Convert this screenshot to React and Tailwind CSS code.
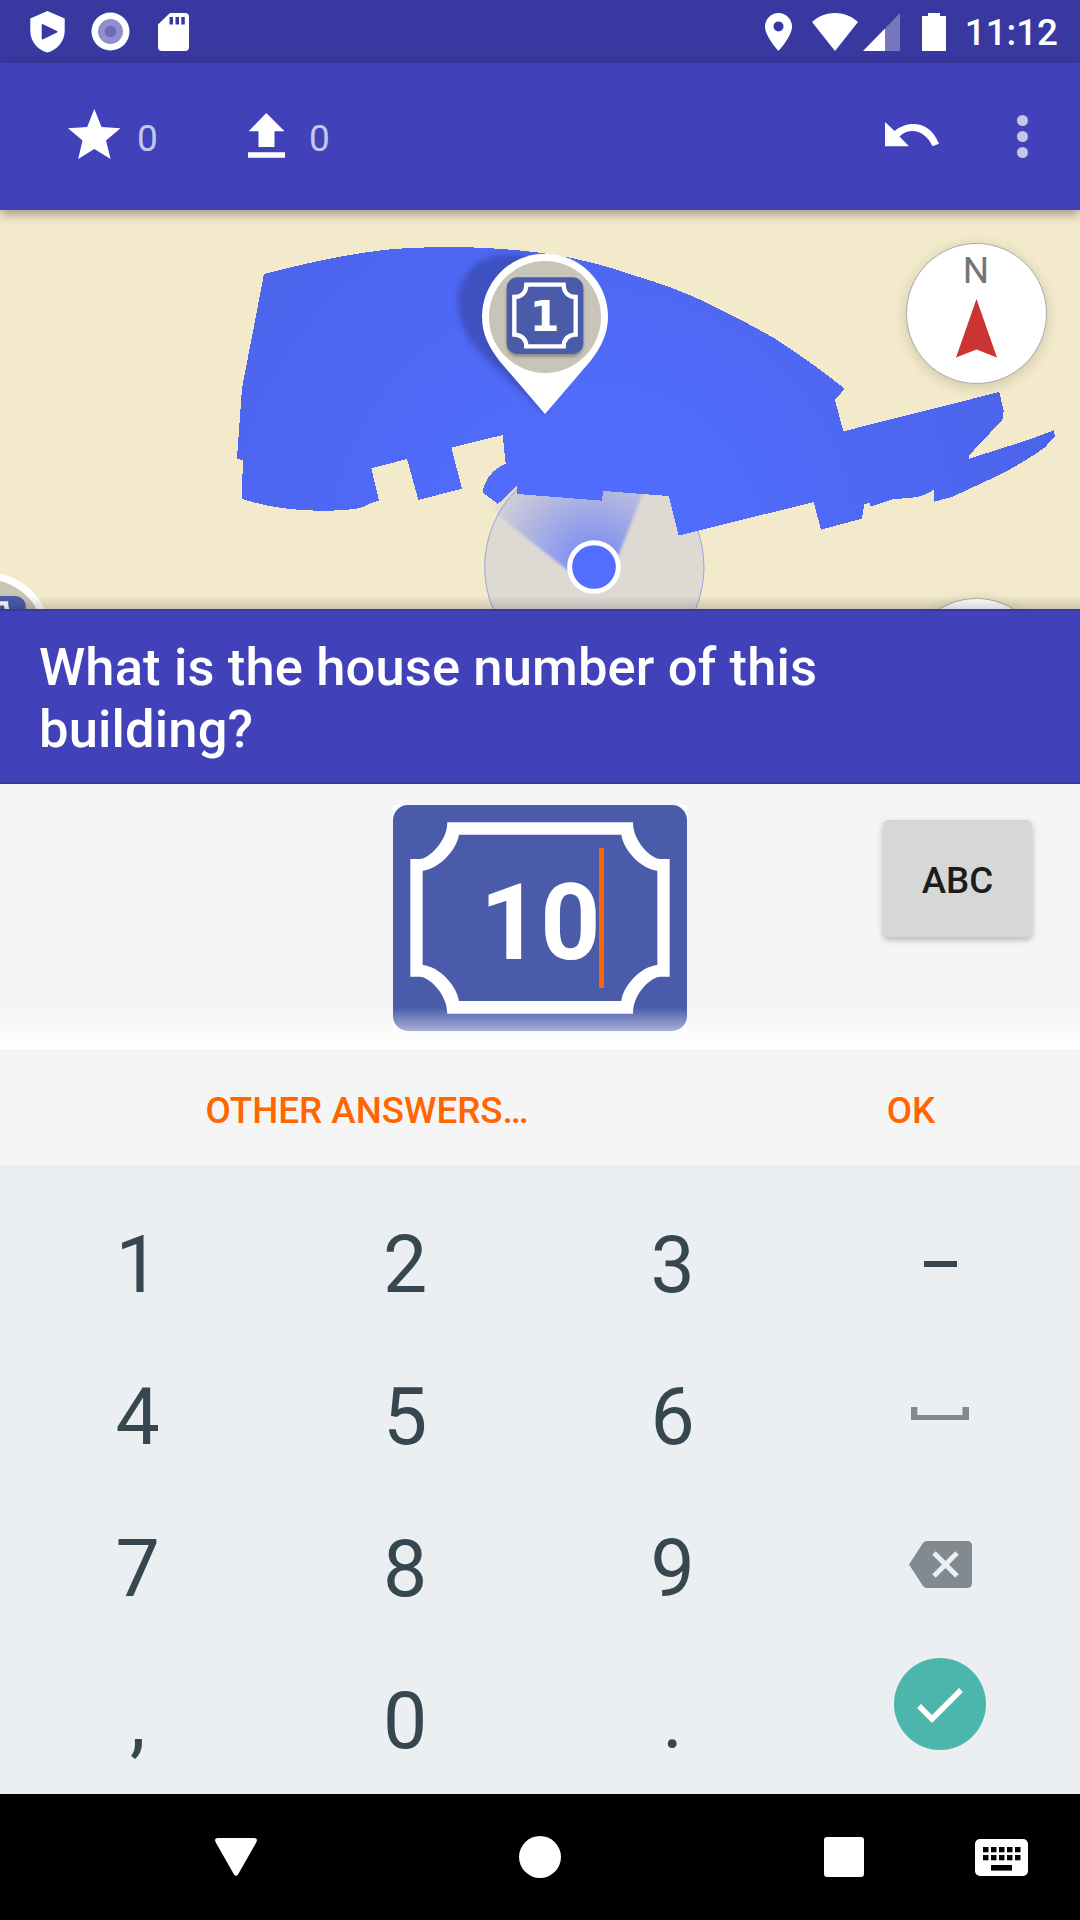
const KEY_ROWS = [
  ['1', '2', '3', 'minus'],
  ['4', '5', '6', 'space'],
  ['7', '8', '9', 'delete'],
  [',', '0', '.', 'done'],
];

function StatusBar() {
  return (
    <div className="flex h-[63px] items-center justify-between bg-[#3838a0] pl-[30px] pr-[22px] text-white">
      <div className="flex h-[63px] items-center">
        <svg width="35" height="42" viewBox="0 0 35 42">
          <path fillRule="evenodd" fill="#fff" d="M17.4 0L34.7 7.5V20C34.7 31 26 39.500 17.4 41.500C8.500 39.500 .3 31 .3 20V7.500ZM13 13.200C12.200 12.800 11.700 13.200 11.700 14V27.500C11.700 28.300 12.400 28.600 13.200 28.200L27 21.500C27.700 21.100 27.700 20.500 27 20.100Z" />
        </svg>
        <svg width="39" height="39" viewBox="0 0 39 39" className="ml-[26px]">
          <circle cx="19.500" cy="19.500" r="19" fill="#fff" />
          <circle cx="19.500" cy="19.500" r="12.500" fill="#8f8fcc" />
          <circle cx="19.500" cy="19.500" r="5.700" fill="#6b6bba" />
        </svg>
        <svg width="31" height="38" viewBox="0 0 31 38" className="ml-[28px]">
          <path fillRule="evenodd" fill="#fff" d="M12 0H27Q31 0 31 4V34Q31 38 27 38H4Q0 38 0 34V11.500ZM11.500 4V11.500H15V4ZM17.500 4V11.500H21V4ZM23.300 4V11.500H26.800V4Z" />
        </svg>
      </div>
      <div className="flex h-[63px] items-center">
        <svg width="27" height="38" viewBox="0 0 27 38">
          <path fillRule="evenodd" fill="#fff" d="M13.500 0A13.500 13.500 0 0 0 0 13.500C0 23.500 13.500 38 13.500 38S27 23.500 27 13.500A13.500 13.500 0 0 0 13.500 0ZM13.500 8.400a5 5 0 1 1 0 10a5 5 0 0 1 0-10Z" />
        </svg>
        <svg width="46" height="38" viewBox="0 0 46 38" className="ml-[20px]">
          <path fill="#fff" d="M0 9C13-3 33-3 46 9L23 38Z" />
        </svg>
        <svg width="37" height="38" viewBox="0 0 37 38" className="ml-[5px]">
          <path fill="#7676bd" d="M22 15.500L37 0V38H22Z" />
          <path fill="#fff" d="M22 15.500V38H0Z" />
        </svg>
        <svg width="24" height="38" viewBox="0 0 24 38" className="ml-[22px]">
          <path fill="#fff" d="M6 0H18V3H24V38H0V3H6Z" />
        </svg>
        <span className="ml-[19px] mt-[3px] text-[36.750px] font-medium leading-none">11:12</span>
      </div>
    </div>
  );
}

function Toolbar() {
  return (
    <div className="relative z-10 flex h-[147px] items-center bg-[#4141ba] pl-[68px] shadow-[0_4px_10px_rgba(0,0,0,0.35)]">
      <svg width="53" height="51" viewBox="0 0 53 51" className="-mt-[4px]">
        <path fill="#fff" d="M26.300 0L33.500 18L52.500 19.300L38 31.500L42.600 50L26.300 40L10.200 50L14.500 31.500L0 19.300L19.200 18Z" />
      </svg>
      <span className="ml-[16px] mt-[4px] w-[22px] text-[37px] leading-none text-[#c6c6ea]">0</span>
      <svg width="37" height="46" viewBox="0 0 37 46" className="ml-[89px] -mt-[2px]">
        <path fill="#fff" d="M18.300 0L36.500 18.300H26.500V34H10.500V18.300H.6ZM0 39.300H37V44.800H0Z" />
      </svg>
      <span className="ml-[24px] mt-[4px] w-[22px] text-[37px] leading-none text-[#c6c6ea]">0</span>
      <svg width="54" height="25" viewBox="0 0 54 25" className="ml-auto -mt-[5px]">
        <path fill="#fff" d="M0 0L9.600 9C22-2 45-2 54 21.700L47.500 24.300C41 9 25 4 14.500 14.500L24 24.300H0Z" />
      </svg>
      <div className="ml-[78px] mr-[52px] flex flex-col gap-[5px]">
        <i className="h-[11px] w-[11px] rounded-full bg-[#c6c6ea]" />
        <i className="h-[11px] w-[11px] rounded-full bg-[#c6c6ea]" />
        <i className="h-[11px] w-[11px] rounded-full bg-[#c6c6ea]" />
      </div>
    </div>
  );
}

function QuestPin({ x, y, label }) {
  return (
    <g transform={`translate(${x} ${y})`}>
      <path filter="url(#soft)" fill="#26307a" opacity=".42" d="M0 290C-50 240-160 150-205 95C-255 35-268-30-258-75C-240-145-190-185-110-187C-40-187 60-160 80-60Z" />
      <path fill="#fff" d="M0 292L-137 132C-165 95-189 55-189 0A189 189 0 0 1 189 0C189 55 165 95 137 132Z" />
      <circle r="168" cy="1" fill="#c8c4b8" />
      <rect x="-115" y="-110" width="230" height="230" rx="32" fill="#8f8c82" filter="url(#tiny)" />
      <rect x="-115" y="-118" width="230" height="230" rx="32" fill="#4a5baa" />
      <path fill="none" stroke="#fff" strokeWidth="13" d="M-56-96H56C56-73 70-59 92-59V54C70 54 56 68 56 89H-56C-56 68-70 54-92 54V-59C-70-59-56-73-56-96Z" />
      {label && (
        <text x="-1" y="43" textAnchor="middle" fontFamily="DejaVu Sans" fontWeight="700" fontSize="128" fill="#fff">{label}</text>
      )}
    </g>
  );
}

function Compass() {
  return (
    <div className="flex h-[141px] w-[141px] flex-col items-center rounded-full border border-[#aaa] bg-white shadow-[0_3px_14px_rgba(0,0,0,0.16)]">
      <span className="mt-[8px] text-[37px] leading-[38px] text-[#757575]">N</span>
      <svg width="41" height="59" viewBox="0 0 41 59" className="mt-[9px]">
        <path fill="#c33" d="M20.500 0L41 58.500L20.500 50.500L0 58.500Z" />
      </svg>
    </div>
  );
}

function MapView() {
  return (
    <div className="relative h-[399px] overflow-hidden bg-[#f3eacb]">
      <svg width="1080" height="399" viewBox="0 210 1080 399" className="block">
        <defs>
          <filter id="soft" x="-20%" y="-20%" width="140%" height="140%"><feGaussianBlur stdDeviation="9" /></filter>
          <filter id="tiny"><feGaussianBlur stdDeviation="4" /></filter>
          <radialGradient id="area" gradientUnits="userSpaceOnUse" cx="1180" cy="1000" r="1500">
            <stop offset="0" stopColor="#526dff" />
            <stop offset=".4" stopColor="#506af8" />
            <stop offset="1" stopColor="#4c63e8" />
          </radialGradient>
          <radialGradient id="cone" gradientUnits="userSpaceOnUse" cx="1182" cy="1041" r="375">
            <stop offset="0" stopColor="#536dfe" stopOpacity=".8" />
            <stop offset="1" stopColor="#536dfe" stopOpacity="0" />
          </radialGradient>
        </defs>
        <g transform="translate(200 220) scale(.33333)">
          <circle cx="1183" cy="1041" r="329" fill="#ded9d3" stroke="#98a2e4" strokeWidth="3" />
          <path fill="url(#cone)" filter="url(#tiny)" d="M1222 1090L1105 1052L920 907L855 840L950 720H1370L1328 822Z" />
          <path
            fill="url(#area)"
            shapeRendering="crispEdges"
            d="M192 162C350 122 520 82 690 82H810Q910 85 1010 97Q1160 115 1320 172Q1400 195 1485 232Q1600 285 1720 353Q1830 423 1934 506L1905 540L1930 634L2398 516L2411 573L2407 600L2308 705V716L2490 658L2561 631L2565 648L2535 682Q2480 722 2400 764L2258 830L2203 845L2202 808L2180 822Q2160 831 2135 833L2078 838L2020 857H2010V850L1993 851L1986 896L1863 929L1841 846L1436 947L1406 828L1210 813L1205 842L951 822L950 797L894 852L847 817Q860 755 917 731L908 645L754 683L786 806L655 840L621 717L514 745L537 842L505 852Q485 872 370 872Q230 872 125 836L129 722L111 716L126 505Z"
          />
          <circle cx="1182" cy="1041" r="73" fill="#536dfe" stroke="#fff" strokeWidth="15" />
          <QuestPin x={1035} y={290} label="1" />
          <QuestPin x={-638} y={1246} />
        </g>
      </svg>
      <div className="absolute left-[905.500px] top-[33px]"><Compass /></div>
      <div className="absolute left-[905.500px] top-[388px] h-[141px] w-[141px] rounded-full border border-[#aaa] bg-white shadow-[0_3px_14px_rgba(0,0,0,0.16)]" />
      <div className="absolute inset-x-0 bottom-0 h-[13px] bg-gradient-to-b from-transparent to-black/15" />
    </div>
  );
}

function HouseNumberForm() {
  return (
    <div className="relative flex h-[265px] items-start bg-[#f5f5f5]">
      <div className="ml-[393px] mt-[21px] grid h-[226px] w-[294px] bg-white">
        <svg width="294" height="226" viewBox="39 75 882 678" className="col-start-1 row-start-1">
          <rect x="39" y="75" width="882" height="678" rx="45" fill="#4a5baa" />
          <path
            fill="#fff"
            fillRule="evenodd"
            d="M202 127H759C758 185 815 237 840 237H869V590H840C815 590 758 640 759 701H202C202 640 145 590 120 590H91V237H120C145 237 202 185 202 127ZM237 164C230 210 178 266 128 272V555C178 560 230 616 237 663H724C730 616 782 560 832 555V272C782 266 730 210 724 164Z"
          />
        </svg>
        <div className="col-start-1 row-start-1 flex pl-[87px] pt-[43px]">
          <span className="mt-[14px] w-[119px] text-[105px] font-bold leading-[123px] text-white">10</span>
          <span className="h-[140px] w-[5px] bg-[#f60]" />
        </div>
      </div>
      <button className="ml-[196px] mt-[36px] h-[117px] w-[149px] rounded-[5px] bg-[#d6d8d7] pt-[5px] text-[36.750px] font-medium text-[#1c1c1c] shadow-[0_3px_6px_rgba(0,0,0,0.25)]">ABC</button>
      <div className="absolute inset-x-0 bottom-0 h-[42px] bg-gradient-to-b from-white/0 to-white/90" />
    </div>
  );
}

const ICONS = {
  minus: <div className="mb-[10px] h-[6px] w-[33px] bg-[#37474f]" />,
  space: (
    <svg width="58" height="13" viewBox="0 0 58 13" className="mb-[16px]">
      <path fill="#808a90" d="M0 0H6.300V8H51.500V0H58V13H0Z" />
    </svg>
  ),
  delete: (
    <svg width="63" height="47" viewBox="0 0 63 47" className="mb-[17px]">
      <path fill="#808a90" d="M18 0H58Q63 0 63 5V42Q63 47 58 47H18Q15.500 47 14 45L0 23.500L14 2Q15.500 0 18 0Z" />
      <path stroke="#ebeff2" strokeWidth="5" d="M25 12L48 35M48 12L25 35" />
    </svg>
  ),
  done: (
    <svg width="92" height="92" viewBox="0 0 92 92" className="mb-[42px]">
      <circle cx="46" cy="46" r="46" fill="#4db6ac" />
      <path fill="none" stroke="#fff" strokeWidth="5.500" d="M25 48L38 61L67 32" />
    </svg>
  ),
};

function Keyboard() {
  return (
    <div className="flex h-[625px] flex-col bg-[#ebeff2] pl-[4px] pt-[24px]">
      {KEY_ROWS.map((row) => (
        <div key={row[0]} className="flex h-[152px]">
          {row.map((k) => (
            <button key={k} className="flex h-[152px] w-[267.500px] items-center justify-center text-[78.750px] leading-none text-[#37474f]">
              {ICONS[k] || <span className="mb-[8px]">{k}</span>}
            </button>
          ))}
        </div>
      ))}
    </div>
  );
}

function NavBar() {
  return (
    <div className="flex h-[126px] items-center bg-black pl-[215px]">
      <svg width="42" height="38" viewBox="0 0 42 38">
        <path fill="#fff" d="M3 0H39Q43 0 41.500 4L23 36.500Q21 39 19 36.500L.5 4Q-1 0 3 0Z" />
      </svg>
      <div className="ml-[262px] h-[42px] w-[42px] rounded-full bg-white" />
      <div className="ml-[263px] h-[40px] w-[40px] rounded-[3px] bg-white" />
      <svg width="53" height="37" viewBox="0 0 53 37" className="ml-[111px]">
        <rect width="53" height="37" rx="5" fill="#fff" />
        {[8, 16, 24, 32, 40].map((x) => (
          <g key={x}>
            <rect x={x} y="8" width="5.500" height="5.300" />
            <rect x={x} y="16" width="5.500" height="5.300" />
          </g>
        ))}
        <rect x="16" y="26" width="21" height="5.600" />
      </svg>
    </div>
  );
}

export default function App() {
  return (
    <div className="h-[1920px] w-[1080px] overflow-hidden bg-[#f5f5f5] font-['Roboto',sans-serif]">
      <StatusBar />
      <Toolbar />
      <MapView />
      <h1 className="h-[175px] border-y-2 border-[#3838a0] bg-[#4141ba] px-[39px] pt-[25px] text-[52.500px] font-medium leading-[62px] tracking-[0.14px] text-white">
        What is the house number of this<br />building?
      </h1>
      <HouseNumberForm />
      <div className="flex h-[120px] items-center border-b-4 border-[#ededed] text-[36.750px] font-medium text-[#f60]">
        <button className="ml-[26px] w-[682px] pt-[8px]">OTHER ANSWERS…</button>
        <button className="ml-[34px] w-[338px] pt-[8px]">OK</button>
      </div>
      <Keyboard />
      <NavBar />
    </div>
  );
}
